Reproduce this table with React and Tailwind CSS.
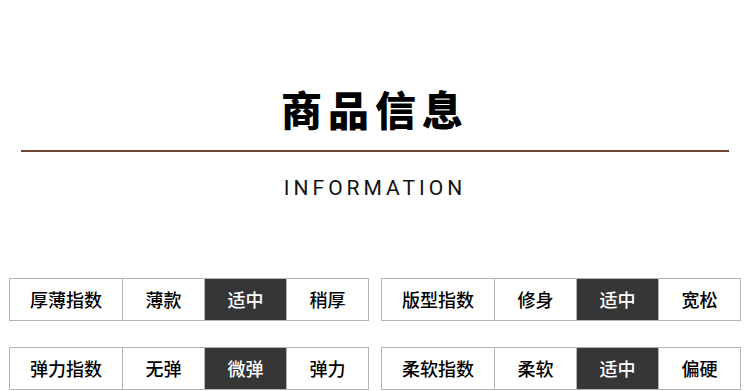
import React from "react";

const rows = [
  [
    { label: "厚薄指数", opts: ["薄款", "适中", "稍厚"], active: 1 },
    { label: "版型指数", opts: ["修身", "适中", "宽松"], active: 1 },
  ],
  [
    { label: "弹力指数", opts: ["无弹", "微弹", "弹力"], active: 1 },
    { label: "柔软指数", opts: ["柔软", "适中", "偏硬"], active: 1 },
  ],
];

const cjk = { fontFamily: '"Noto Sans CJK SC", "Noto Sans", sans-serif' };

const IndexTable = ({ label, opts, active }) => (
  <div className="flex w-[360px] h-[43px] border border-[#b4b4b4] text-[18px] font-medium text-black" style={cjk}>
    <div className="w-[112px] flex items-center justify-center">{label}</div>
    {opts.map((o, i) => (
      <div
        key={o + i}
        className={
          "w-[82px] border-l border-[#b4b4b4] flex items-center justify-center " +
          (i === active ? "bg-[#363636] text-white" : "")
        }
      >
        {o}
      </div>
    ))}
  </div>
);

export default function App() {
  return (
    <div className="w-[750px] h-[391px] bg-white overflow-hidden">
      <div className="pt-[82px] flex justify-center">
        <h1 className="text-[41px] leading-[52px] font-black tracking-[6px] text-black" style={cjk}>
          商品信息
        </h1>
      </div>
      <div className="mt-[16px] mx-[21px] h-[2px] bg-[#6e4530]" />
      <div className="mt-[24px] flex justify-center">
        <div
          className="text-[21px] leading-[24px] tracking-[4px] text-[#111]"
          style={{ fontFamily: 'Roboto, "Liberation Sans", sans-serif' }}
        >
          INFORMATION
        </div>
      </div>
      <div className="mt-[78px] px-[9px] flex flex-col gap-[26px]">
        {rows.map((r, i) => (
          <div key={i} className="flex justify-between">
            {r.map((t) => (
              <IndexTable key={t.label} {...t} />
            ))}
          </div>
        ))}
      </div>
    </div>
  );
}
